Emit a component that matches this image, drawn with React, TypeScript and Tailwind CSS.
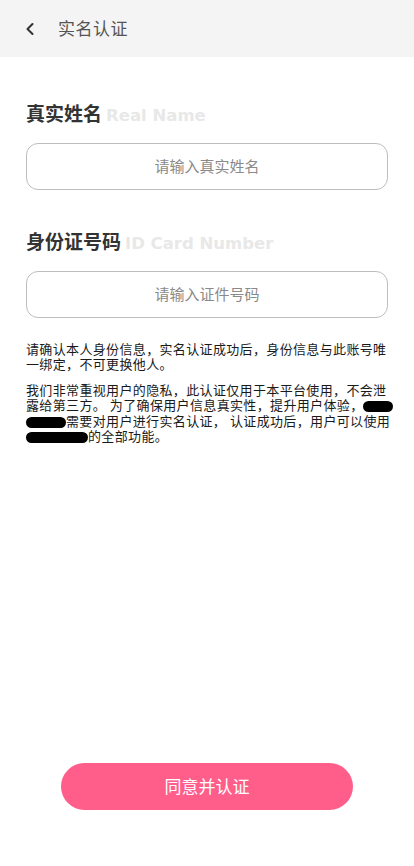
import { ChevronLeft } from "lucide-react";

const font = { fontFamily: '"Noto Sans", "Noto Sans CJK SC", sans-serif' };
const enFont = { fontFamily: '"DejaVu Sans", "Noto Sans", sans-serif' };

function Blob({ w }: { w: string }) {
  return <span className={`inline-block h-[11px] ${w} rounded-full bg-black align-middle`} />;
}

function Field({ label, en, placeholder }: { label: string; en: string; placeholder: string }) {
  return (
    <div>
      <div className="flex items-baseline gap-[4px]">
        <span className="text-[19px] font-bold text-[#333]">{label}</span>
        <span className="text-[16.5px] font-bold text-[#e8e8e8]" style={enFont}>
          {en}
        </span>
      </div>
      <input
        className="mt-[14px] h-[47px] w-full rounded-[12px] border border-[#bdbdbd] bg-white text-center text-[15px] text-[#444] outline-none placeholder:text-[#8a8a8a]"
        placeholder={placeholder}
        style={font}
      />
    </div>
  );
}

export default function App() {
  return (
    <div className="flex min-h-[866px] flex-col bg-white" style={font}>
      <header className="flex h-[57px] items-center bg-[#f4f4f4] pl-[20px]">
        <ChevronLeft size={20} strokeWidth={2.5} className="text-[#333]" />
        <span className="ml-[18px] text-[17px] tracking-[0.5px] text-[#555]">实名认证</span>
      </header>

      <main className="flex flex-1 flex-col px-[26px]">
        <div className="mt-[43px]">
          <Field label="真实姓名" en="Real Name" placeholder="请输入真实姓名" />
        </div>
        <div className="mt-[38px]">
          <Field label="身份证号码" en="ID Card Number" placeholder="请输入证件号码" />
        </div>

        <div className="mt-[24px] whitespace-nowrap text-[13px] leading-[15.5px] tracking-[0.35px] text-[#1a1a1a]">
          <p>
            <span className="block">请确认本人身份信息，实名认证成功后，身份信息与此账号唯</span>
            <span className="block">一绑定，不可更换他人。</span>
          </p>
          <p className="mt-[10px]">
            <span className="block">我们非常重视用户的隐私，此认证仅用于本平台使用，不会泄</span>
            <span className="block">
              露给第三方。 为了确保用户信息真实性，提升用户体验，<Blob w="w-[30px]" />
            </span>
            <span className="block">
              <Blob w="w-[40px]" />需要对用户进行实名认证， 认证成功后，用户可以使用
            </span>
            <span className="block">
              <Blob w="w-[62px]" />的全部功能。
            </span>
          </p>
        </div>

        <div className="mt-auto mb-[56px] flex justify-center">
          <button className="h-[47px] w-[292px] rounded-full bg-[#ff5e8a] text-[17px] text-white">
            同意并认证
          </button>
        </div>
      </main>
    </div>
  );
}
